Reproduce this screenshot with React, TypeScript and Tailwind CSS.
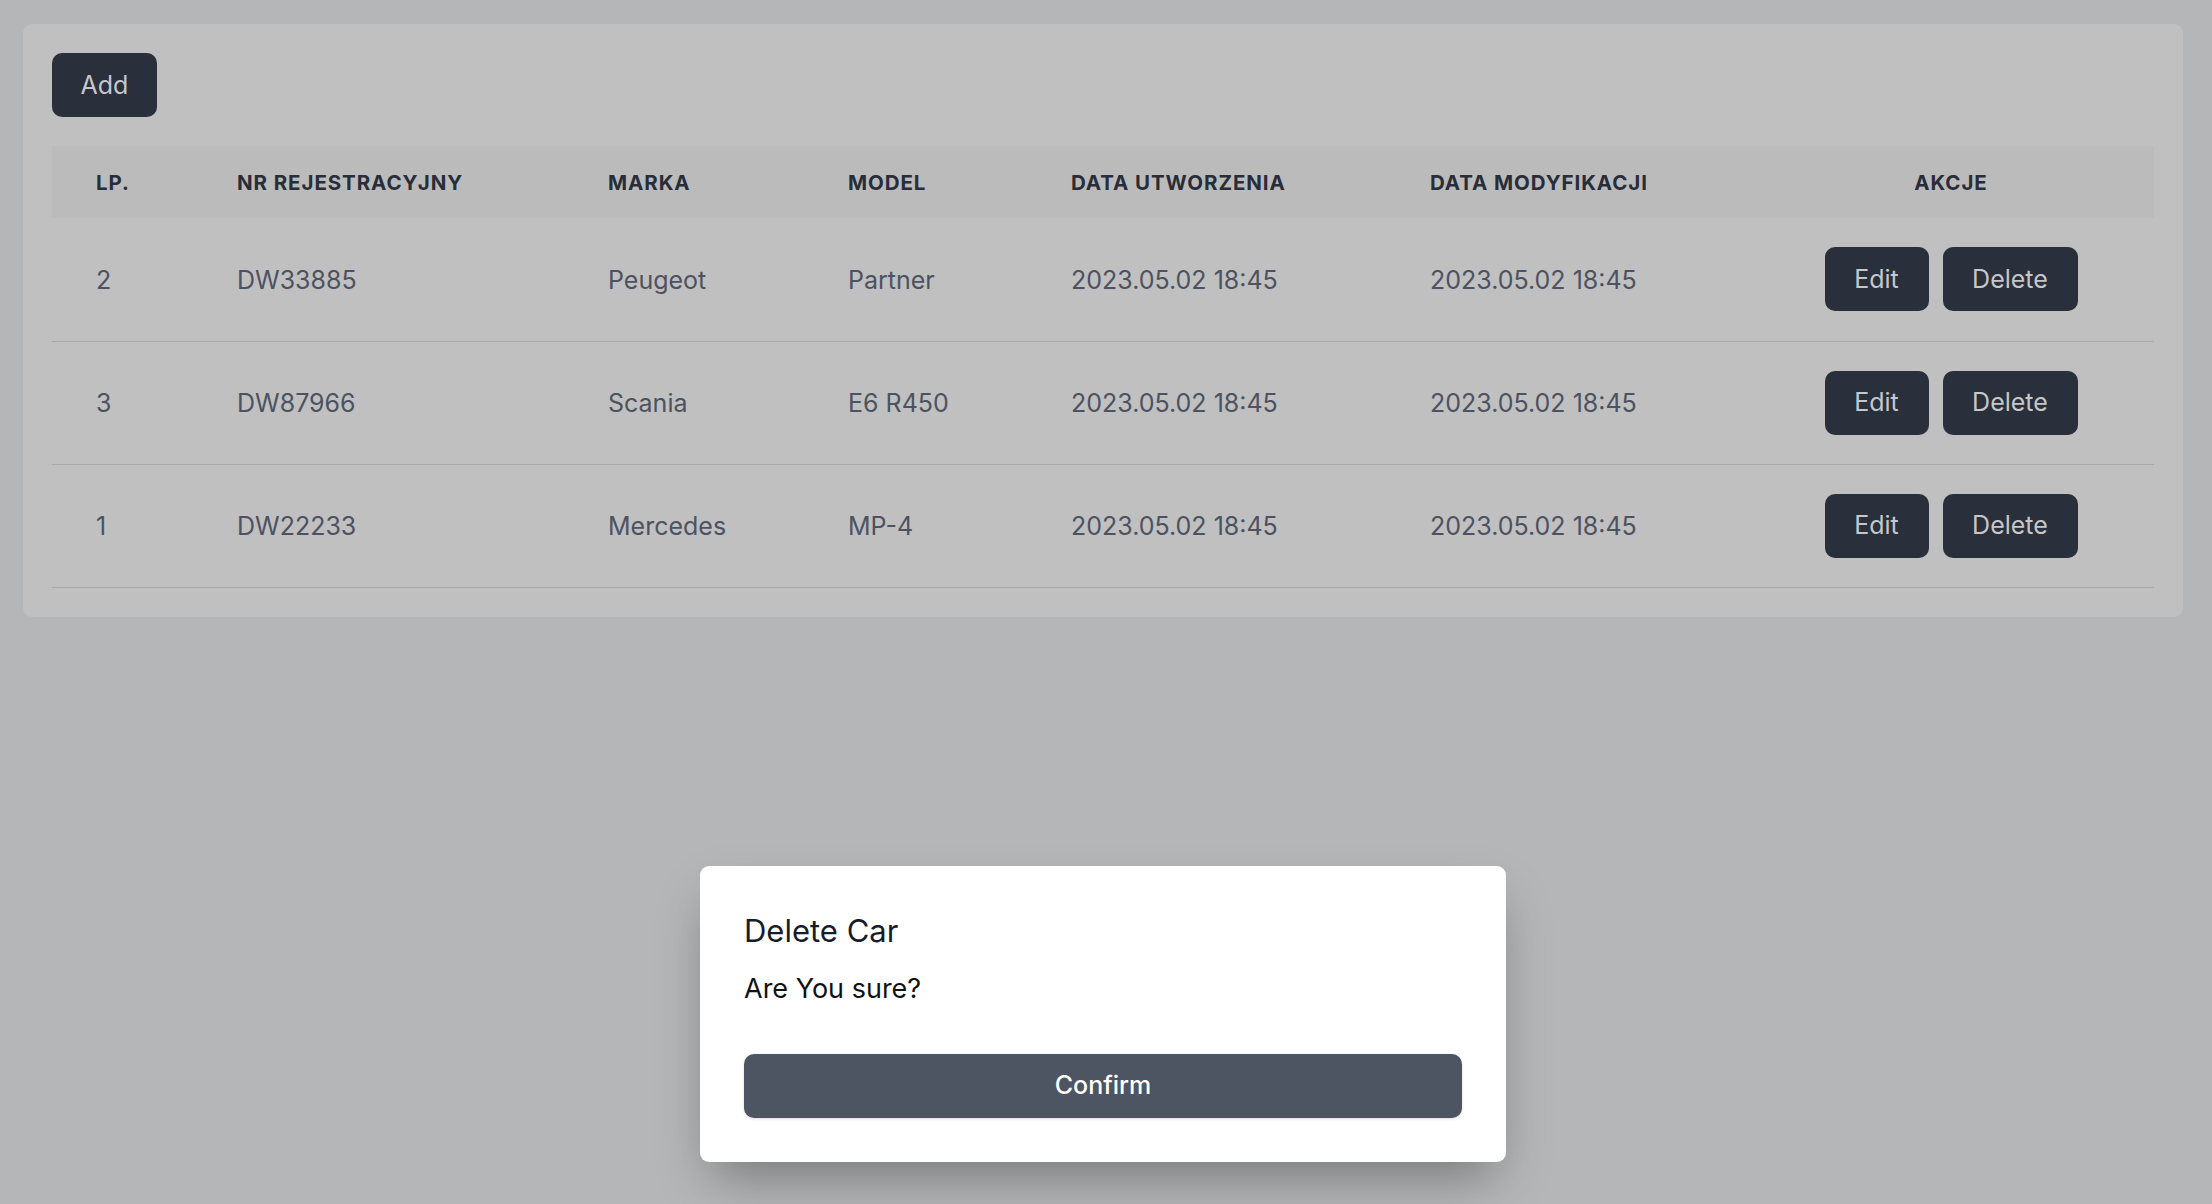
import React from "react";

const rows = [
  { lp: "2", nr: "DW33885", marka: "Peugeot", model: "Partner", c: "2023.05.02 18:45", m: "2023.05.02 18:45" },
  { lp: "3", nr: "DW87966", marka: "Scania", model: "E6 R450", c: "2023.05.02 18:45", m: "2023.05.02 18:45" },
  { lp: "1", nr: "DW22233", marka: "Mercedes", model: "MP-4", c: "2023.05.02 18:45", m: "2023.05.02 18:45" },
];

const headers = ["LP.", "NR REJESTRACYJNY", "MARKA", "MODEL", "DATA UTWORZENIA", "DATA MODYFIKACJI"];

export default function App() {
  return (
    <div
      className="min-h-[1204px] w-full bg-[#b5b6b8] pt-[24px] px-[23px] relative"
      style={{ fontFamily: "Inter, 'Noto Sans', sans-serif" }}
    >
      <div className="w-[2160px] bg-[#c0c0c0] rounded-[9px] p-[29px]">
        <button className="h-[64px] w-[105px] rounded-[10px] bg-[#292f3b] text-[#c6c7ca] text-[25px] leading-none">
          Add
        </button>
        <table className="mt-[29px] w-[2102px] table-fixed border-collapse">
          <colgroup>
            <col className="w-[141px]" />
            <col className="w-[371px]" />
            <col className="w-[240px]" />
            <col className="w-[223px]" />
            <col className="w-[359px]" />
            <col className="w-[362px]" />
            <col className="w-[406px]" />
          </colgroup>
          <thead>
            <tr className="bg-[#bbbbbb] h-[72px]">
              {headers.map((h) => (
                <th
                  key={h}
                  className="text-left pl-[44px] pt-[2px] text-[20.5px] font-bold tracking-[0.045em] text-[#282d39] whitespace-nowrap"
                >
                  {h}
                </th>
              ))}
              <th className="text-center pt-[2px] text-[20.5px] font-bold tracking-[0.045em] text-[#282d39]">AKCJE</th>
            </tr>
          </thead>
          <tbody>
            {rows.map((r) => (
              <tr key={r.nr} className="h-[123px] border-b border-[#a9a9aa]">
                {[r.lp, r.nr, r.marka, r.model, r.c, r.m].map((v, i) => (
                  <td key={i} className="pl-[44px] pt-[2px] text-[25px] text-[#4c5261] whitespace-nowrap">
                    {v}
                  </td>
                ))}
                <td>
                  <div className="flex justify-center gap-[14px]">
                    <button className="h-[64px] w-[104px] rounded-[10px] bg-[#292f3b] text-[#c6c7ca] text-[25px] leading-none">
                      Edit
                    </button>
                    <button className="h-[64px] w-[135px] rounded-[10px] bg-[#292f3b] text-[#c6c7ca] text-[25px] leading-none">
                      Delete
                    </button>
                  </div>
                </td>
              </tr>
            ))}
          </tbody>
        </table>
      </div>

      <div className="absolute inset-0 flex items-end justify-center pb-[42px] pr-[6px]">
        <div className="w-[806px] bg-white rounded-[9px] p-[44px] shadow-[0_25px_50px_-12px_rgba(0,0,0,0.35)]">
          <h2 className="text-[31px] leading-[42px] text-[#161c2b]">Delete Car</h2>
          <p className="mt-[17px] text-[27px] leading-[40px] text-[#111111]">Are You sure?</p>
          <button className="mt-[45px] w-full h-[64px] rounded-[10px] bg-[#4d5462] text-white text-[25px] font-medium shadow-[0_1px_3px_rgba(0,0,0,0.15)]">
            Confirm
          </button>
        </div>
      </div>
    </div>
  );
}
